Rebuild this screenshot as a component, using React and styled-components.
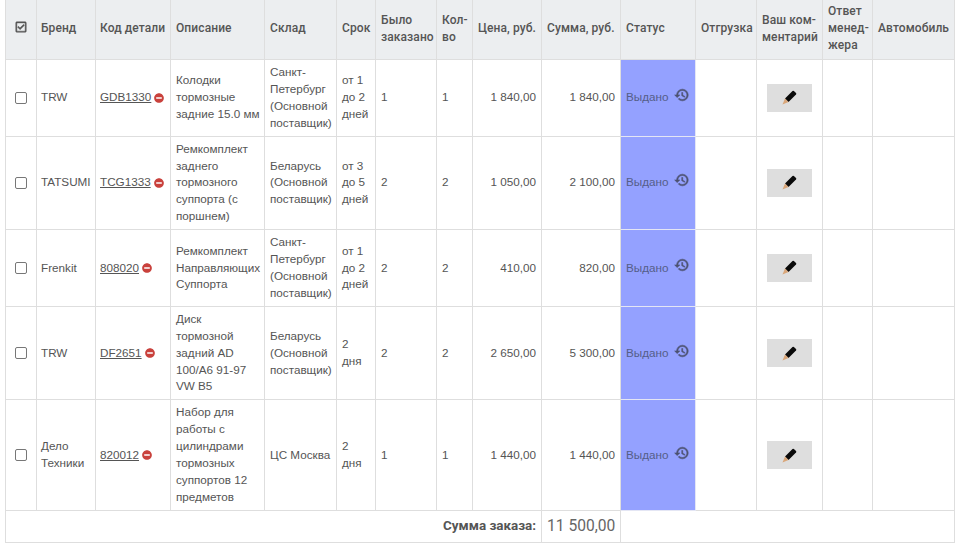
import React from 'react';
import styled, { createGlobalStyle } from 'styled-components';
import { FaMinusCircle, FaRegCheckSquare } from 'react-icons/fa';

const GlobalStyle = createGlobalStyle`
  html, body {
    margin: 0;
    padding: 0;
    background: #fff;
  }
  body {
    font-family: "Liberation Sans", Arial, sans-serif;
    font-size: 11.7px;
    line-height: 16.9px;
    color: #555;
  }
`;

const Page = styled.div`
  padding: 0 5px;
  width: 950px;
  height: 549px;
  overflow: hidden;
`;

const Table = styled.table`
  width: 949px;
  table-layout: fixed;
  border-collapse: collapse;
`;

const Th = styled.th`
  background: #eceef0;
  border: 1px solid #dedede;
  border-top: 0;
  padding: 3px 5px 5px ${p => (p.$tight ? '4px' : '5px')};
  height: 51px;
  text-align: left;
  font-family: Roboto, sans-serif;
  font-size: 12px;
  font-weight: 500;
  letter-spacing: 0.1px;
  color: #555;
`;

const Td = styled.td`
  border: 1px solid #dedede;
  padding: 4px 5px 4px ${p => (p.$tight ? '4px' : '5px')};
  vertical-align: middle;
  text-align: ${p => (p.$right ? 'right' : 'left')};
`;

const DescCell = styled(Td)`
  padding-right: 2px;
`;

const StatusCell = styled(Td)`
  background: #94a1ff;
  border-color: #e4e6f4;
  color: #555e88;
`;

const StatusRow = styled.div`
  display: flex;
  align-items: center;
  gap: 6px;
`;

const HistorySvg = styled.svg`
  width: 18px;
  height: 18px;
  color: #4c5270;
  margin-top: -5px;
`;

const CenterBox = styled.div`
  display: flex;
  justify-content: center;
`;

const Checkbox = styled.span`
  display: block;
  width: 10px;
  height: 10px;
  border: 1px solid #777;
  border-radius: 2px;
  background: #fff;
  margin-left: 4px;
`;

const HeadCheck = styled(FaRegCheckSquare)`
  display: block;
  width: 12px;
  height: 12px;
  color: #555;
  stroke: currentColor;
  stroke-width: 20;
  margin: -3px 0 0 4px;
`;

const PartLink = styled.a`
  color: #555;
  text-decoration: underline;
`;

const PartCell = styled.span`
  display: inline-flex;
  align-items: center;
  gap: 3px;
  white-space: nowrap;
`;

const StopIcon = styled(FaMinusCircle)`
  width: 10px;
  height: 10px;
  color: #c9413c;
`;

const EditButton = styled.button`
  display: flex;
  align-items: center;
  justify-content: center;
  width: 45px;
  height: 28px;
  padding: 0;
  border: 0;
  background: #dedede;
`;

const SummaryLabel = styled(Td)`
  text-align: right;
  font-family: Roboto, sans-serif;
  font-weight: 700;
  font-size: 13.4px;
  height: 23px;
`;

const SummaryValue = styled(Td)`
  text-align: right;
  font-family: Roboto, sans-serif;
  font-size: 15.6px;
  white-space: nowrap;
  color: #666;
`;

const PencilIcon = () => (
  <svg width="15" height="15" viewBox="0 0 15 15">
    <path d="M3 8.5 10.5 1a1 1 0 0 1 1.4 0L14 3.1a1 1 0 0 1 0 1.4L6.5 12z" fill="#0a0a0a" />
    <path d="M3 8.5 6.5 12 .5 14.5z" fill="#d9a679" />
  </svg>
);

const HistoryIcon = () => (
  <HistorySvg viewBox="0 0 24 24">
    <path
      d="M13 3a9 9 0 0 0-9 9H1l3.89 3.89.07.14L9 12H6c0-3.87 3.13-7 7-7s7 3.13 7 7-3.13 7-7 7c-1.93 0-3.68-.79-4.94-2.06l-1.42 1.42A8.954 8.954 0 0 0 13 21a9 9 0 0 0 0-18zm-1 5v5l4.28 2.54.72-1.21-3.5-2.08V8H12z"
      fill="currentColor"
      stroke="currentColor"
      strokeWidth="0.9"
    />
  </HistorySvg>
);

const widths = [31, 59, 75, 94, 72, 39, 61, 36, 69, 79, 75, 61, 66, 50, 82];

const headers = [
  null,
  'Бренд',
  'Код\u00a0детали',
  'Описание',
  'Склад',
  'Срок',
  'Было заказано',
  'Кол-во',
  'Цена, руб.',
  'Сумма, руб.',
  'Статус',
  'Отгрузка',
  'Ваш ком-\u200bментарий',
  'Ответ менед-\u200bжера',
  'Автомобиль',
];

const rows = [
  {
    brand: 'TRW',
    code: 'GDB1330',
    desc: 'Колодки тормозные задние 15.0 мм',
    stock: 'Санкт-Петербург (Основной поставщик)',
    term: 'от 1 до 2 дней',
    ordered: '1',
    qty: '1',
    price: '1 840,00',
    total: '1 840,00',
  },
  {
    brand: 'TATSUMI',
    code: 'TCG1333',
    desc: 'Ремкомплект заднего тормозного суппорта (с поршнем)',
    stock: 'Беларусь (Основной поставщик)',
    term: 'от 3 до 5 дней',
    ordered: '2',
    qty: '2',
    price: '1 050,00',
    total: '2 100,00',
  },
  {
    brand: 'Frenkit',
    code: '808020',
    desc: 'Ремкомплект Направляющих Суппорта',
    stock: 'Санкт-Петербург (Основной поставщик)',
    term: 'от 1 до 2 дней',
    ordered: '2',
    qty: '2',
    price: '410,00',
    total: '820,00',
  },
  {
    brand: 'TRW',
    code: 'DF2651',
    desc: 'Диск тормозной задний AD 100/A6 91-97 VW B5',
    stock: 'Беларусь (Основной поставщик)',
    term: '2 дня',
    ordered: '2',
    qty: '2',
    price: '2 650,00',
    total: '5 300,00',
  },
  {
    brand: 'Дело Техники',
    code: '820012',
    desc: 'Набор для работы с цилиндрами тормозных суппортов 12 предметов',
    stock: 'ЦС Москва',
    term: '2 дня',
    ordered: '1',
    qty: '1',
    price: '1 440,00',
    total: '1 440,00',
  },
];

export default function App() {
  return (
    <Page>
      <GlobalStyle />
      <Table>
        <colgroup>
          {widths.map((w, i) => (
            <col key={i} width={w} />
          ))}
        </colgroup>
        <thead>
          <tr>
            {headers.map((h, i) => (
              <Th key={i} $tight={i === 1 || i === 2}>{h === null ? <HeadCheck /> : h}</Th>
            ))}
          </tr>
        </thead>
        <tbody>
          {rows.map(r => (
            <tr key={r.code}>
              <Td><Checkbox /></Td>
              <Td $tight>{r.brand}</Td>
              <Td $tight>
                <PartCell>
                  <PartLink href="#">{r.code}</PartLink>
                  <StopIcon />
                </PartCell>
              </Td>
              <DescCell>{r.desc}</DescCell>
              <Td>{r.stock}</Td>
              <Td>{r.term}</Td>
              <Td>{r.ordered}</Td>
              <Td>{r.qty}</Td>
              <Td $right>{r.price}</Td>
              <Td $right>{r.total}</Td>
              <StatusCell>
                <StatusRow>
                  Выдано
                  <HistoryIcon />
                </StatusRow>
              </StatusCell>
              <Td />
              <Td>
                <CenterBox>
                  <EditButton><PencilIcon /></EditButton>
                </CenterBox>
              </Td>
              <Td />
              <Td />
            </tr>
          ))}
          <tr>
            <SummaryLabel colSpan={9}>Сумма заказа:</SummaryLabel>
            <SummaryValue>11 500,00</SummaryValue>
            <Td colSpan={5} />
          </tr>
        </tbody>
      </Table>
    </Page>
  );
}
